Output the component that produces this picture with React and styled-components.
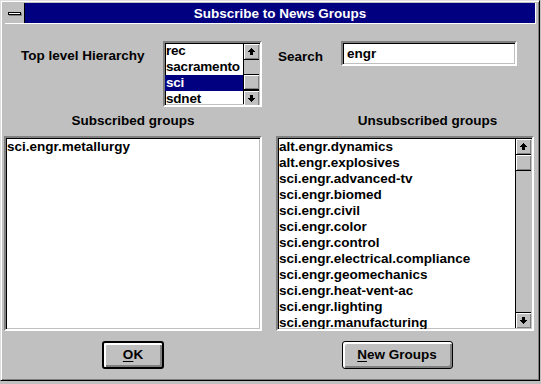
import React from 'react'
import styled, { createGlobalStyle, css } from 'styled-components'

const GlobalStyle = createGlobalStyle`
  html, body {
    margin: 0;
    padding: 0;
    background: #c0c0c0;
  }
  * {
    box-sizing: border-box;
  }
`

const FONT = `"Liberation Sans", Arial, sans-serif`

const Window = styled.div`
  width: 540px;
  height: 381px;
  background: #c0c0c0;
  border: 1px solid;
  border-color: #dfdfdf #000 #000 #dfdfdf;
  box-shadow: inset 1px 1px 0 #fff, inset -1px -1px 0 #808080;
  padding: 2px 3px 2px 3px;
  display: flex;
  flex-direction: column;
  font-family: ${FONT};
  font-weight: bold;
  font-size: 13.5px;
  color: #000;
`

const TitleBar = styled.div`
  display: flex;
  height: 21px;
  margin-left: 1px;
  border-bottom: 1px solid #fff;
  border-right: 1px solid #fff;
`

const SysMenu = styled.div`
  width: 20px;
  height: 20px;
  background: #c0c0c0;
  border-right: 1px solid #000;
  display: flex;
  align-items: center;
  justify-content: center;
  padding-top: 1px;
`

const SysBar = styled.span`
  display: block;
  width: 13px;
  height: 3px;
  background: #fff;
  border: 1px solid #000;
  box-shadow: 1px 1px 0 #808080;
`

const Title = styled.div`
  flex: 1;
  background: #000080;
  color: #fff;
  display: flex;
  align-items: center;
  justify-content: center;
`

const Client = styled.div`
  flex: 1;
  display: flex;
  flex-direction: column;
  padding-top: 17px;
`

const TopRow = styled.div`
  display: flex;
  height: 66px;
  padding-left: 17px;
`

const Label = styled.label`
  display: block;
  width: ${p => p.$width}px;
  margin-top: ${p => p.$top}px;
  line-height: 16px;
  white-space: nowrap;
`

const sunken = css`
  border: 2px solid;
  border-color: #808080 #fff #fff #808080;
  box-shadow: inset 1px 1px 0 #000, inset -1px -1px 0 #c0c0c0;
  background: #fff;
`

const ListBox = styled.div`
  ${sunken}
  width: ${p => p.$width}px;
  height: ${p => p.$height}px;
  display: flex;
  overflow: hidden;
  margin-right: ${p => p.$mr || 0}px;
`

const Items = styled.ul`
  flex: 1;
  min-width: 0;
  list-style: none;
  margin: 0;
  padding: ${p => p.$top || 0}px 0 0 0;
  overflow: hidden;
  letter-spacing: ${p => p.$spacing || 0}px;
`

const Item = styled.li`
  height: 16px;
  line-height: 16px;
  padding-left: ${p => p.$indent}px;
  white-space: nowrap;
  background: ${p => (p.$selected ? '#000080' : 'transparent')};
  color: ${p => (p.$selected ? '#fff' : '#000')};
`

const ScrollBar = styled.div`
  width: 16px;
  flex-shrink: 0;
  display: flex;
  flex-direction: column;
  border-left: 1px solid #000;
  background: #c0c0c0;
  margin: 1px 1px 1px 0;
`

const bevel = css`
  background: #c0c0c0;
  box-shadow: inset 1px 1px 0 #fff, inset -1px -1px 0 #808080;
`

const ArrowBtn = styled.div`
  ${bevel}
  height: 16px;
  flex-shrink: 0;
  display: flex;
  align-items: center;
  justify-content: center;
  border-${p => (p.$down ? 'top' : 'bottom')}: 1px solid #000;
`

const Track = styled.div`
  flex: 1;
  display: flex;
  flex-direction: column;
`

const Thumb = styled.div`
  ${bevel}
  height: 16px;
  margin-top: ${p => p.$offset}px;
  border-top: ${p => (p.$offset > 0 ? '1px solid #000' : 'none')};
  border-bottom: 1px solid #000;
`

const SearchBox = styled.div`
  ${sunken}
  width: 176px;
  height: 25px;
  padding: 3px 0 0 4px;
  line-height: 16px;
`

const Headings = styled.div`
  display: grid;
  grid-template-columns: 258px 258px;
  column-gap: 14px;
  height: 29px;
  padding-top: 6px;
`

const Heading = styled.div`
  text-align: center;
  line-height: 16px;
  padding-left: ${p => p.$shift || 0}px;
`

const Lists = styled.div`
  display: grid;
  grid-template-columns: 258px 258px;
  column-gap: 14px;
`

const Buttons = styled.div`
  display: grid;
  grid-template-columns: 258px 258px;
  column-gap: 14px;
  margin-top: 10px;
`

const Button = styled.button`
  justify-self: center;
  width: ${p => p.$width}px;
  height: 28px;
  margin-right: ${p => p.$mr || 0}px;
  font-family: ${FONT};
  font-weight: bold;
  font-size: 13.5px;
  line-height: 16px;
  color: #000;
  background: #c0c0c0;
  border: ${p => (p.$default ? 2 : 1)}px solid #000;
  border-radius: 3px;
  box-shadow: inset 1px 1px 0 #fff, inset 2px 2px 0 #fff, inset -1px -1px 0 #808080,
    inset -2px -2px 0 #808080;
  padding: 0;
  cursor: default;

  u {
    text-decoration-thickness: 1px;
    text-underline-offset: 2px;
  }
`

function Arrow({ down }) {
  return (
    <svg
      width="7"
      height="7"
      viewBox="0 0 7 7"
      shapeRendering="crispEdges"
      style={down ? { transform: 'rotate(180deg)' } : undefined}
    >
      <path d="M3 0H4V1H5V2H6V3H7V4H5V7H2V4H0V3H1V2H2V1H3Z" fill="#000" />
    </svg>
  )
}

function VScroll({ offset }) {
  return (
    <ScrollBar>
      <ArrowBtn>
        <Arrow />
      </ArrowBtn>
      <Track>
        <Thumb $offset={offset} />
      </Track>
      <ArrowBtn $down>
        <Arrow down />
      </ArrowBtn>
    </ScrollBar>
  )
}

const hierarchy = ['rec', 'sacramento', 'sci', 'sdnet']

const subscribed = ['sci.engr.metallurgy']

const unsubscribed = [
  'alt.engr.dynamics',
  'alt.engr.explosives',
  'sci.engr.advanced-tv',
  'sci.engr.biomed',
  'sci.engr.civil',
  'sci.engr.color',
  'sci.engr.control',
  'sci.engr.electrical.compliance',
  'sci.engr.geomechanics',
  'sci.engr.heat-vent-ac',
  'sci.engr.lighting',
  'sci.engr.manufacturing',
]

export default function App() {
  return (
    <>
      <GlobalStyle />
      <Window>
        <TitleBar>
          <SysMenu>
            <SysBar />
          </SysMenu>
          <Title>Subscribe to News Groups</Title>
        </TitleBar>
        <Client>
          <TopRow>
            <Label $width={142} $top={7}>Top level Hierarchy</Label>
            <ListBox $width={99} $height={66} $mr={16}>
              <Items $spacing={-0.2}>
                {hierarchy.map(h => (
                  <Item key={h} $indent={1} $selected={h === 'sci'}>
                    {h}
                  </Item>
                ))}
              </Items>
              <VScroll offset={14} />
            </ListBox>
            <Label $width={63} $top={8}>Search</Label>
            <SearchBox>engr</SearchBox>
          </TopRow>
          <Headings>
            <Heading>Subscribed groups</Heading>
            <Heading $shift={45}>Unsubscribed groups</Heading>
          </Headings>
          <Lists>
            <ListBox $width={258} $height={195}>
              <Items $top={1}>
                {subscribed.map(s => (
                  <Item key={s} $indent={1}>{s}</Item>
                ))}
              </Items>
            </ListBox>
            <ListBox $width={258} $height={195}>
              <Items $top={1}>
                {unsubscribed.map(s => (
                  <Item key={s} $indent={1}>{s}</Item>
                ))}
              </Items>
              <VScroll offset={0} />
            </ListBox>
          </Lists>
          <Buttons>
            <Button $width={62} $default>
              <u>O</u>K
            </Button>
            <Button $width={111} $mr={16}>
              <u>N</u>ew Groups
            </Button>
          </Buttons>
        </Client>
      </Window>
    </>
  )
}
